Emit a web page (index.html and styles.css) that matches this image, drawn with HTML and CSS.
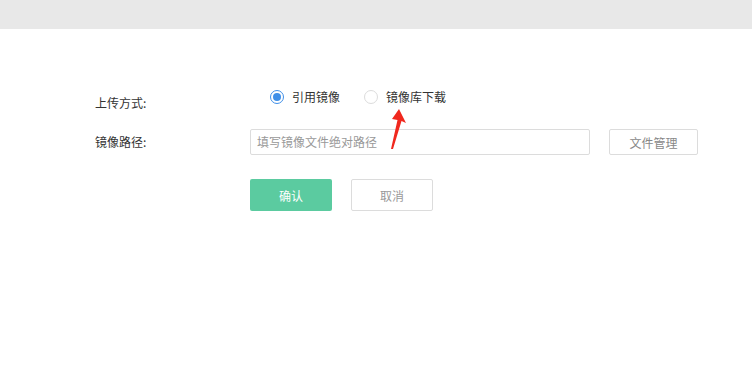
FILE: index.html
```html
<!DOCTYPE html>
<html lang="zh">
<head>
<meta charset="utf-8">
<link rel="stylesheet" href="styles.css">
</head>
<body>
<div class="topbar"></div>
<div class="form">
  <div class="row row-mode">
    <div class="label label-mode">上传方式:</div>
    <div class="radios">
      <label class="radio checked"><span class="dot"></span><span class="rtext">引用镜像</span></label>
      <label class="radio"><span class="dot"></span><span class="rtext">镜像库下载</span></label>
    </div>
  </div>
  <div class="row row-path">
    <div class="label">镜像路径:</div>
    <div class="input">填写镜像文件绝对路径</div>
    <div class="btn btn-file">文件管理</div>
  </div>
  <div class="row row-actions">
    <div class="btn btn-ok">确认</div>
    <div class="btn btn-cancel">取消</div>
  </div>
</div>
<svg class="arrow" width="20" height="44" viewBox="0 0 20 44">
  <polygon points="11,0 18,14 13.5,12 5,40 3,40 9.5,11 4,10" fill="#f0281e"/>
</svg>
</body>
</html>
```

FILE: styles.css
```css
html, body {
  margin: 0;
  padding: 0;
  background: #fff;
  font-family: "Noto Sans CJK SC", "Microsoft YaHei", sans-serif;
  font-size: 12px;
  color: #333;
  position: relative;
  width: 752px;
  height: 379px;
  overflow: hidden;
}
.topbar {
  height: 29px;
  background: #e8e8e8;
}
.form {
  padding-left: 95px;
  padding-top: 60px;
}
.row {
  display: flex;
  align-items: center;
}
.label {
  width: 155px;
  line-height: 16px;
  color: #333;
}
.row-mode {
  align-items: flex-start;
  height: 22px;
}
.label-mode {
  padding-top: 6px;
}
.radios {
  display: flex;
  align-items: center;
  line-height: 16px;
  padding-left: 20px;
}
.radio {
  display: flex;
  align-items: center;
  margin-right: 24px;
  color: #333;
}
.dot {
  box-sizing: border-box;
  width: 14px;
  height: 14px;
  border-radius: 50%;
  border: 1px solid #dcdcdc;
  background: #fff;
  margin-right: 8px;
  position: relative;
}
.radio.checked .dot {
  border-color: #3f8fe8;
}
.radio.checked .dot::after {
  content: "";
  position: absolute;
  left: 2px;
  top: 2px;
  width: 8px;
  height: 8px;
  border-radius: 50%;
  background: #3f8fe8;
}
.row-path {
  margin-top: 18px;
}
.input {
  box-sizing: border-box;
  width: 340px;
  height: 26px;
  border: 1px solid #dcdcdc;
  border-radius: 2px;
  padding-left: 6px;
  line-height: 24px;
  color: #999;
}
.btn {
  box-sizing: border-box;
  display: flex;
  align-items: center;
  justify-content: center;
  border-radius: 2px;
}
.btn-file {
  margin-left: 19px;
  width: 89px;
  height: 26px;
  border: 1px solid #dcdcdc;
  color: #888;
}
.row-actions {
  margin-top: 24px;
  padding-left: 155px;
}
.btn-ok {
  width: 82px;
  height: 32px;
  background: #5bcba0;
  color: #fff;
}
.btn-cancel {
  margin-left: 19px;
  width: 82px;
  height: 32px;
  border: 1px solid #dcdcdc;
  color: #999;
}
.arrow {
  position: absolute;
  left: 388px;
  top: 109px;
}
```
